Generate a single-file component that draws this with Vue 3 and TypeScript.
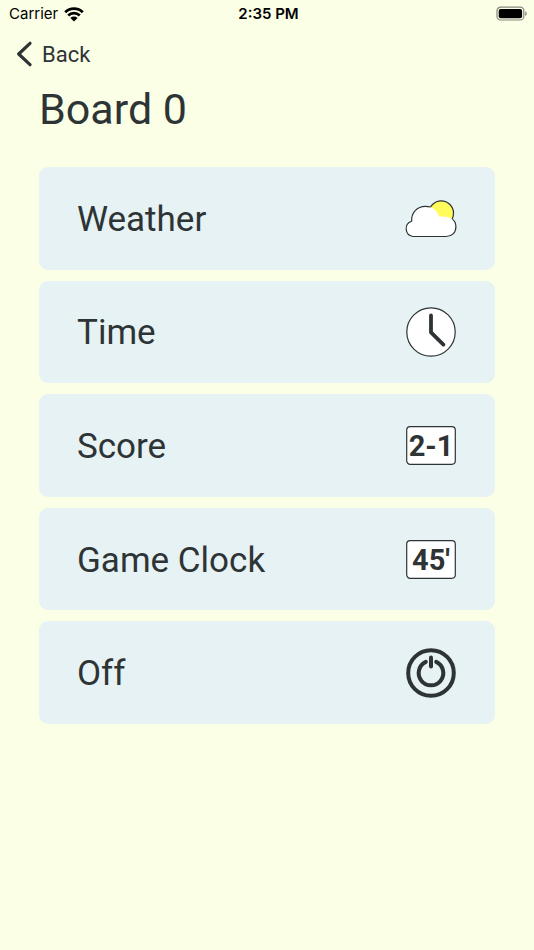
<script setup lang="ts">
type IconName = 'weather' | 'time' | 'score' | 'clock' | 'off'

interface BoardMode {
  label: string
  icon: IconName
}

const modes: BoardMode[] = [
  { label: 'Weather', icon: 'weather' },
  { label: 'Time', icon: 'time' },
  { label: 'Score', icon: 'score' },
  { label: 'Game Clock', icon: 'clock' },
  { label: 'Off', icon: 'off' },
]
</script>

<template>
  <div class="screen">
    <header class="status">
      <div class="carrier">
        <span>Carrier</span>
        <svg class="wifi" viewBox="0 0 20 15" aria-hidden="true">
          <path d="M1.2 5.3a12.4 12.4 0 0 1 17.6 0M4.2 8.5a8.2 8.2 0 0 1 11.6 0" fill="none" stroke="#000" stroke-width="2.7" />
          <path d="M6.4 11a5.1 5.1 0 0 1 7.2 0L10 14.6z" fill="#000" />
        </svg>
      </div>
      <div class="time">2:35 PM</div>
      <div class="power">
        <svg class="battery" viewBox="0 0 32 16" aria-hidden="true">
          <rect x="1" y="1.2" width="26.8" height="12.8" rx="3.6" fill="none" stroke="#85877c" stroke-width="1.2" />
          <rect x="2.7" y="2.9" width="23.4" height="9.4" rx="2" fill="#000" />
          <path d="M29.2 5.5c2 .6 2 3.8 0 4.4z" fill="#85877c" />
        </svg>
      </div>
    </header>

    <nav class="nav">
      <a class="back" href="#">
        <svg class="chevron" viewBox="0 0 16 26" aria-hidden="true">
          <path d="M14 2.3 2.7 13l11.3 10.7" fill="none" stroke="#2e3436" stroke-width="3.2" stroke-linecap="round" stroke-linejoin="round" />
        </svg>
        <span>Back</span>
      </a>
    </nav>

    <main class="content">
      <h1 class="title">Board 0</h1>
      <div class="modes">
        <button v-for="mode in modes" :key="mode.label" class="mode" type="button">
          <span class="label">{{ mode.label }}</span>
          <svg class="icon" viewBox="0 0 52 52" aria-hidden="true">
            <template v-if="mode.icon === 'weather'">
              <circle cx="36.2" cy="21.2" r="12.3" fill="#fffc5c" stroke="#2e3436" stroke-width="1.2" />
              <path d="M7.8 44.5a7.9 7.9 0 0 1-1.2-15.3C6.3 20.8 12 14.4 20.3 14.3c6.3 0 11.6 3.5 14 10.5 8.5-1.6 16.6 2 16.6 9.9 0 6-4.2 9.8-9.8 9.8z" fill="#fff" />
              <path d="M25.2 15C23.7 14.5 22.1 14.3 20.3 14.3 12 14.4 6.3 20.8 6.6 29.2a7.9 7.9 0 0 0 1.2 15.3h33.3c5.6 0 9.8-3.8 9.8-9.8 0-3.3-1.3-5.7-3.3-7.3" fill="none" stroke="#2e3436" stroke-width="1.2" />
            </template>
            <template v-else-if="mode.icon === 'time'">
              <circle cx="26" cy="26" r="24.2" fill="#fff" stroke="#2e3436" stroke-width="1.2" />
              <path d="M26 9.5V26.4L38.4 38.6" fill="none" stroke="#2e3436" stroke-width="3.8" stroke-linecap="round" stroke-linejoin="round" />
            </template>
            <template v-else-if="mode.icon === 'score' || mode.icon === 'clock'">
              <rect x="1.7" y="7.7" width="48.6" height="37.6" rx="3.5" fill="#fff" stroke="#2e3436" stroke-width="1.2" />
              <text class="digits" x="26" y="37" text-anchor="middle">{{ mode.icon === 'score' ? '2-1' : "45'" }}</text>
            </template>
            <template v-else>
              <circle cx="26" cy="26" r="22.8" fill="none" stroke="#2e3436" stroke-width="4" />
              <path d="M20.8 14.9A12.3 12.3 0 1 0 31.2 14.9" fill="none" stroke="#2e3436" stroke-width="4" stroke-linecap="round" />
              <path d="M26 10.4v9" fill="none" stroke="#2e3436" stroke-width="4" stroke-linecap="round" />
            </template>
          </svg>
        </button>
      </div>
    </main>
  </div>
</template>

<style>
body {
  background: #fbffe6;
}
</style>

<style scoped>
.screen {
  min-height: 100vh;
  background: #fbffe6;
  color: #2e3436;
  font-family: Roboto, 'Liberation Sans', sans-serif;
}

.status {
  display: grid;
  grid-template-columns: 1fr auto 1fr;
  align-items: center;
  height: 28px;
  padding: 0 6px 0 9px;
  color: #000;
  font-family: Inter, 'Liberation Sans', sans-serif;
  font-size: 15px;
  line-height: 28px;
}

.carrier {
  display: flex;
  align-items: center;
  gap: 6px;
}

.wifi {
  width: 20px;
  height: 15px;
}

.time {
  font-weight: 600;
}

.power {
  display: flex;
  justify-content: flex-end;
}

.battery {
  width: 32px;
  height: 16px;
}

.nav {
  display: flex;
  height: 52px;
  padding: 0 16px;
}

.back {
  display: flex;
  align-items: center;
  gap: 10px;
  color: inherit;
  font-size: 22px;
  text-decoration: none;
}

.chevron {
  width: 16px;
  height: 26px;
}

.content {
  padding: 0 39px;
}

.title {
  margin: 0 0 29px;
  font-size: 43px;
  font-weight: 400;
  line-height: 58px;
}

.modes {
  display: grid;
  grid-auto-rows: 1fr;
  gap: 11px;
  min-height: 557px;
}

.mode {
  display: flex;
  align-items: center;
  justify-content: space-between;
  padding: 0 38px;
  border: 0;
  border-radius: 9px;
  background: #e6f2f3;
  color: inherit;
  font-family: inherit;
  font-size: 35px;
  text-align: left;
}

.label {
  padding-top: 2px;
}

.icon {
  width: 52px;
  height: 52px;
}

.digits {
  fill: #2e3436;
  font-family: Roboto, Arial, sans-serif;
  font-size: 29px;
  font-weight: 700;
}
</style>
